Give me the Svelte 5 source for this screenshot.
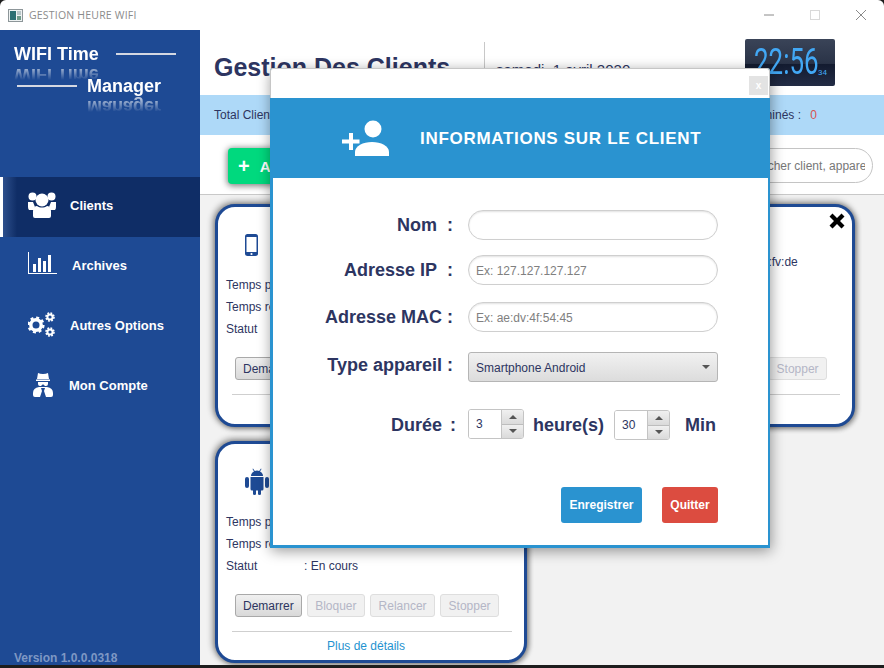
<script>
	const nav = [
		{ id: 'clients', label: 'Clients', active: true },
		{ id: 'archives', label: 'Archives' },
		{ id: 'options', label: 'Autres Options' },
		{ id: 'compte', label: 'Mon Compte' }
	];

	const clients = [
		{ type: 'phone', nom: 'Client 1', ip: '192.168.1.12', mac: 'ae:dv:4f:54:fv:de', statut: 'En cours' },
		{ type: 'phone', nom: 'Client 2', ip: '192.168.1.13', mac: 'ae:dv:4f:54:fv:de', statut: 'En cours' },
		{ type: 'android', nom: 'Client 3', ip: '192.168.1.14', mac: 'ae:dv:4f:54:fv:de', statut: 'En cours' }
	];
</script>

{#snippet navIcon(id)}
	{#if id === 'clients'}
		<svg class="ic-users" viewBox="0 0 28 26" fill="#fff">
			<circle cx="4.500" cy="4.500" r="4" />
			<circle cx="23.500" cy="4.500" r="4" />
			<circle cx="14" cy="8" r="6.500" />
			<path d="M0 10h5l2 5-1 3H1q-1-1-1-3zM28 10h-5l-2 5 1 3h5q1-1 1-3z" />
			<path d="M5 24v-5c0-3 2-5 4-5 3 2 7 2 10 0 2 0 4 2 4 5v5q0 2-2 2H7q-2 0-2-2z" />
		</svg>
	{:else if id === 'archives'}
		<svg class="ic-chart" viewBox="0 0 29 22" fill="#fff">
			<path d="M0 0h1v21h28v1H0z" />
			<rect x="5" y="12" width="3" height="8" />
			<rect x="10" y="6" width="3" height="14" />
			<rect x="15" y="9" width="3" height="11" />
			<rect x="20" y="3" width="3" height="17" />
		</svg>
	{:else if id === 'options'}
		<svg class="ic-gears" viewBox="0 0 28 26" fill="none" stroke="#fff">
			<circle cx="8" cy="13" r="5.200" stroke-width="3.400" />
			<circle cx="8" cy="13" r="7.400" stroke-width="2.400" stroke-dasharray="3 2.800" />
			<circle cx="22" cy="5" r="2.600" stroke-width="2" />
			<circle cx="22" cy="5" r="4" stroke-width="1.600" stroke-dasharray="1.800 1.340" />
			<circle cx="22" cy="20" r="2.600" stroke-width="2" />
			<circle cx="22" cy="20" r="4" stroke-width="1.600" stroke-dasharray="1.800 1.340" />
		</svg>
	{:else}
		<svg class="ic-spy" viewBox="0 0 20 24" fill="#fff">
			<path d="M5 0q2 1 5 1t5-1l1 6H4z" />
			<path d="M3 6.500h14v1.500H3z" />
			<path d="M5 9h10v2q0 2-2 2h-1l-1.500-1.500h-1L8 13H7q-2 0-2-2z" />
			<path d="M6 14h8q6 1 6 6v2q0 2-2 2h-5l-2-6 1-3H8l1 3-2 6H2q-2 0-2-2v-2q0-5 6-6z" />
		</svg>
	{/if}
{/snippet}

{#snippet deviceIcon(type)}
	{#if type === 'android'}
		<svg class="ic-android" viewBox="0 0 24 28" fill="#1e4a94">
			<path d="M6 9q0-3 3-4.500L7.500 2l.5-.5L9.800 4q2.200-.8 4.400 0L16 1.500l.5.5L15 4.500q3 1.500 3 4.500z" />
			<path d="M5.500 10h13v12q0 1.500-1.500 1.500h-1V27q0 1-1.500 1T13 27v-3.500h-2V27q0 1-1.500 1T8 27v-3.500H7q-1.500 0-1.500-1.500z" />
			<rect x="0" y="10" width="4" height="11" rx="2" />
			<rect x="20" y="10" width="4" height="11" rx="2" />
		</svg>
	{:else}
		<svg class="ic-phone" viewBox="0 0 13 22">
			<rect width="13" height="22" rx="2.500" fill="#1e4a94" />
			<rect x="1.500" y="3" width="10" height="15" fill="#fff" />
			<circle cx="6.500" cy="20" r="1.100" fill="#fff" />
		</svg>
	{/if}
{/snippet}

<div class="window">
	<header class="titlebar">
		<svg class="app-icon" viewBox="0 0 15 13">
			<rect x=".5" y=".5" width="14" height="12" fill="#eef2f2" stroke="#8d9699" />
			<rect x="2" y="2" width="6" height="9" fill="#2c6f73" />
			<rect x="9" y="2" width="4" height="4" fill="#b9c6c9" />
			<rect x="9" y="7" width="4" height="4" fill="#6f9a8a" />
		</svg>
		<span class="app-title">GESTION HEURE WIFI</span>
		<div class="win-ctrls">
			<svg viewBox="0 0 12 12" stroke="#8a8a8a"><path d="M1 6h10" /></svg>
			<svg viewBox="0 0 12 12" stroke="#d9d9d9" fill="none"><rect x="1.500" y="1.500" width="9" height="9" /></svg>
			<svg viewBox="0 0 12 12" stroke="#8a8a8a"><path d="M1 1l10 10M11 1L1 11" /></svg>
		</div>
	</header>

	<div class="shell">
		<aside class="sidebar">
			<div class="logo">
				<div class="logo-row first">
					<span class="logo-text">WIFI Time</span>
					<i class="logo-line"></i>
				</div>
				<div class="logo-row second">
					<i class="logo-line"></i>
					<span class="logo-text">Manager</span>
				</div>
			</div>
			<nav class="nav">
				{#each nav as item}
					<a class="nav-item {item.id}" class:active={item.active} href="#{item.id}">
						{@render navIcon(item.id)}
						<span>{item.label}</span>
					</a>
				{/each}
			</nav>
			<div class="version">Version 1.0.0.0318</div>
		</aside>

		<main class="main">
			<div class="top">
				<h1>Gestion Des Clients</h1>
				<div class="date">samedi, 1 avril 2020</div>
				<div class="clock"><span class="time">22:56</span><span class="secs">34</span></div>
			</div>
			<div class="stats">
				<span>Total Clients : <b>3</b></span>
				<span class="last">Terminés : <b>0</b></span>
			</div>
			<div class="toolbar">
				<button class="add"><span class="plus">+</span>Ajouter Client</button>
				<input class="search" placeholder="Rechercher client, appareil" />
			</div>
			<div class="cards">
				{#each clients as c}
					<article class="card">
						<svg class="close" viewBox="0 0 16 16" fill="#000">
							<path d="M3.500 0.500L8 5l4.500-4.500 3 3L11 8l4.500 4.500-3 3L8 11l-4.500 4.500-3-3L5 8 .5 3.500z" />
						</svg>
						<div class="card-head">
							<div class="device">{@render deviceIcon(c.type)}</div>
							<div class="ident">
								<div>Nom : {c.nom}</div>
								<div>Adresse IP : {c.ip}</div>
								<div>Adresse MAC : {c.mac}</div>
							</div>
						</div>
						<div class="line"><span>Temps passé</span><span>: 00:12:40</span></div>
						<div class="line"><span>Temps restant</span><span>: 02:47:20</span></div>
						<div class="line"><span>Statut</span><span>: {c.statut}</span></div>
						<div class="actions">
							<button class="btn on">Demarrer</button>
							<button class="btn" disabled>Bloquer</button>
							<button class="btn" disabled>Relancer</button>
							<button class="btn" disabled>Stopper</button>
						</div>
						<div class="more"><a href="#details">Plus de détails</a></div>
					</article>
				{/each}
			</div>
		</main>
	</div>

	<div class="taskbar"></div>

	<section class="modal">
		<div class="modal-top">
			<button class="modal-x">x</button>
		</div>
		<div class="modal-head">
			<svg class="ic-add" viewBox="0 0 48 37" fill="#fff">
				<circle cx="32" cy="9" r="8.500" />
				<path d="M14 36v-4c0-6 8-10 17-10s17 4 17 10v4z" />
				<path d="M8 13h4v6.500h6.500v4H12V30H8v-6.500H1v-4h7z" />
			</svg>
			<h2>INFORMATIONS SUR LE CLIENT</h2>
		</div>
		<form class="modal-body">
			<div class="field f-nom">
				<label for="nom">Nom&nbsp; :</label>
				<input id="nom" class="pill" />
			</div>
			<div class="field f-ip">
				<label for="ip">Adresse IP&nbsp; :</label>
				<input id="ip" class="pill" placeholder="Ex: 127.127.127.127" />
			</div>
			<div class="field f-mac">
				<label for="mac">Adresse MAC :</label>
				<input id="mac" class="pill" placeholder="Ex: ae:dv:4f:54:45" />
			</div>
			<div class="field f-type">
				<label for="type">Type appareil :</label>
				<div class="select">
					<select id="type"><option>Smartphone Android</option></select>
				</div>
			</div>
			<div class="field f-duree">
				<label for="h">Durée&nbsp; :</label>
				<div class="spin">
					<input id="h" value="3" />
					<div class="arrows"><span class="up"></span><span class="down"></span></div>
				</div>
				<span class="unit heures">heure(s)</span>
				<div class="spin low">
					<input value="30" />
					<div class="arrows"><span class="up"></span><span class="down"></span></div>
				</div>
				<span class="unit min">Min</span>
			</div>
			<div class="modal-actions">
				<button type="button" class="save">Enregistrer</button>
				<button type="button" class="quit">Quitter</button>
			</div>
		</form>
	</section>
</div>

<style>
	:global(body) {
		background: #1d1d1d;
	}
	.window {
		position: relative;
		width: 884px;
		height: 668px;
		display: flex;
		flex-direction: column;
		overflow: hidden;
		font-family: 'Liberation Sans', Arial, sans-serif;
		color: #2d3561;
		border-radius: 6px 6px 0 0;
	}

	.titlebar {
		height: 30px;
		flex: none;
		display: flex;
		align-items: center;
		padding-left: 8px;
		background: #fff;
	}
	.app-icon {
		width: 15px;
		height: 13px;
		margin-right: 6px;
	}
	.app-title {
		font-family: 'Open Sans', sans-serif;
		font-size: 10.5px;
		color: #8b8b8b;
		letter-spacing: 0.2px;
	}
	.win-ctrls {
		margin-left: auto;
		display: flex;
		gap: 34px;
		padding-right: 17px;
	}
	.win-ctrls svg {
		width: 12px;
		height: 12px;
	}

	.shell {
		flex: 1;
		display: flex;
		min-height: 0;
	}
	.sidebar {
		width: 200px;
		flex: none;
		display: flex;
		flex-direction: column;
		background: #1e4a94;
		color: #fff;
	}
	.logo {
		height: 147px;
		flex: none;
		font-size: 18px;
		font-weight: 700;
	}
	.logo-row {
		display: flex;
		align-items: center;
	}
	.logo-row.first {
		padding: 14px 0 0 14px;
		gap: 17px;
	}
	.logo-row.second {
		padding: 12px 0 0 17px;
		gap: 10px;
	}
	.logo-text {
		line-height: 20px;
		-webkit-box-reflect: below 1px linear-gradient(transparent 25%, rgba(255, 255, 255, 0.75));
	}
	.logo-line {
		display: block;
		width: 60px;
		height: 2px;
		background: #d4d8e2;
	}

	.nav {
		display: flex;
		flex-direction: column;
	}
	.nav-item {
		height: 60px;
		box-sizing: border-box;
		padding: 0 0 4px 28px;
		display: flex;
		align-items: center;
		color: #fff;
		font-size: 13px;
		font-weight: 700;
		text-decoration: none;
	}
	.nav-item.active {
		background: linear-gradient(90deg, #2d4f8c 0, #0f2d66 14px);
		border-left: 3px solid #fff;
		padding-left: 25px;
	}
	.ic-users {
		width: 28px;
		height: 26px;
		margin-right: 14px;
	}
	.ic-chart {
		width: 29px;
		height: 22px;
		margin: -4px 15px 0 0;
	}
	.ic-gears {
		width: 28px;
		height: 26px;
		margin-right: 14px;
	}
	.ic-spy {
		width: 20px;
		height: 24px;
		margin: 0 16px 0 5px;
	}
	.version {
		margin: auto 0 0 14px;
		font-size: 12px;
		font-weight: 700;
		line-height: 14px;
		color: #7e98c4;
	}

	.main {
		flex: 1;
		min-width: 0;
		display: flex;
		flex-direction: column;
		background: #fff;
	}
	.top {
		height: 65px;
		flex: none;
		display: flex;
		align-items: center;
		padding-left: 14px;
	}
	.top h1 {
		width: 270px;
		margin: 10px 0 0;
		font-size: 25px;
		font-weight: 700;
	}
	.date {
		align-self: stretch;
		margin-top: 12px;
		padding: 19px 0 0 11px;
		width: 249px;
		border-left: 1px solid #c8c8c8;
		font-size: 15px;
	}
	.clock {
		width: 90px;
		height: 47px;
		display: flex;
		align-items: flex-end;
		gap: 2px;
		padding: 0 0 7px 9px;
		box-sizing: border-box;
		border-radius: 2px;
		background: linear-gradient(#3a4458 0, #2a3347 52%, #131b30 54%, #232c45 100%);
		color: #42a8f5;
		font-family: Roboto, sans-serif;
		font-weight: 400;
	}
	.time {
		display: inline-block;
		width: 62px;
		font-size: 36px;
		line-height: 34px;
		transform: scaleX(0.72);
		transform-origin: left;
		white-space: nowrap;
	}
	.secs {
		font-size: 8px;
		line-height: 10px;
		margin-bottom: 1px;
	}
	.stats {
		height: 40px;
		flex: none;
		display: flex;
		align-items: center;
		padding: 0 67px 0 14px;
		background: #aed9f8;
		font-size: 12px;
	}
	.stats .last {
		margin-left: auto;
	}
	.stats b {
		font-weight: 400;
		color: #d9534f;
		margin-left: 6px;
	}
	.toolbar {
		height: 60px;
		flex: none;
		box-sizing: border-box;
		display: flex;
		align-items: flex-start;
		justify-content: space-between;
		padding: 13px 11px 0 28px;
		border-bottom: 1px solid #c8c8c8;
	}
	.add {
		height: 36px;
		width: 140px;
		padding: 0 0 0 10px;
		display: flex;
		align-items: center;
		border: 0;
		border-radius: 4px;
		background: #00d97e;
		box-shadow: 0 1px 6px 1px rgba(0, 0, 0, 0.5);
		color: #fff;
		font: 700 15px 'Liberation Sans', Arial, sans-serif;
	}
	.plus {
		font-size: 20px;
		margin-right: 10px;
	}
	.search {
		width: 154px;
		height: 35px;
		box-sizing: border-box;
		padding: 0 7px 0 9px;
		border: 1px solid #c4c4c4;
		border-radius: 18px;
		font: 12px 'Liberation Sans', Arial, sans-serif;
	}
	.search::placeholder {
		color: #777;
	}

	.cards {
		flex: 1;
		min-height: 0;
		display: grid;
		grid-template-columns: 312px 312px;
		grid-template-rows: 223px 222px;
		gap: 14px 16px;
		padding: 9px 0 0 15px;
		background: #f2f2f2;
		overflow: hidden;
	}
	.card {
		position: relative;
		box-sizing: border-box;
		padding: 0 8px;
		background: #fff;
		border: 3px solid #1e4a94;
		border-radius: 20px;
		box-shadow: -1px -1px 6px 1px rgba(0, 0, 0, 0.45), 2px 2px 5px rgba(0, 0, 0, 0.3);
		font-size: 12px;
	}
	.close {
		position: absolute;
		top: 6px;
		right: 7px;
		width: 16px;
		height: 16px;
	}
	.card-head {
		height: 67px;
		display: flex;
	}
	.device {
		width: 71px;
		padding: 27px 0 0 19px;
		box-sizing: border-box;
	}
	.ic-phone {
		display: block;
		width: 13px;
		height: 22px;
	}
	.ic-android {
		display: block;
		width: 24px;
		height: 28px;
		margin-top: -4px;
	}
	.ident {
		flex: 1;
		padding-top: 18px;
		line-height: 15px;
		white-space: nowrap;
	}
	.line {
		display: grid;
		grid-template-columns: 78px 1fr;
		height: 22px;
		line-height: 22px;
	}
	.actions {
		display: flex;
		gap: 5px;
		margin: 17px 0 0 9px;
	}
	.btn {
		height: 23px;
		padding: 0 7.5px;
		border: 1px solid #dedede;
		border-radius: 3px;
		background: #f1f1f1;
		color: #b4b6c6;
		font: 12px 'Liberation Sans', Arial, sans-serif;
	}
	.btn.on {
		padding: 0 7px;
		border-color: #a9a9a9;
		background: linear-gradient(#f0f0f0, #d9d9d9);
		color: #2d3561;
	}
	.more {
		margin: 14px 4px 0 6px;
		padding-top: 7px;
		border-top: 1px solid #cfcfcf;
		text-align: center;
		line-height: 14px;
	}
	.more a {
		color: #1f93d0;
		text-decoration: none;
		margin-right: 12px;
	}

	.taskbar {
		height: 3px;
		flex: none;
		background: #1d1d1d;
	}

	.modal {
		position: absolute;
		top: 68px;
		left: 270px;
		width: 500px;
		height: 480px;
		display: flex;
		flex-direction: column;
		box-shadow: 1px 3px 14px rgba(0, 0, 0, 0.4);
		border-radius: 3px 3px 0 0;
		background: #2a93d0;
	}
	.modal-top {
		height: 30px;
		flex: none;
		box-sizing: border-box;
		display: flex;
		justify-content: flex-end;
		padding: 7px 1px 0 0;
		background: #fff;
		border: 1px solid #c6c6c6;
		border-bottom: 0;
		border-radius: 3px 3px 0 0;
	}
	.modal-x {
		width: 19px;
		height: 19px;
		padding: 0;
		border: 0;
		background: #e3e3e3;
		color: #fff;
		font: 700 10px 'Liberation Sans', Arial, sans-serif;
	}
	.modal-head {
		height: 80px;
		flex: none;
		display: flex;
		align-items: center;
		padding-left: 71px;
		color: #fff;
	}
	.ic-add {
		width: 48px;
		height: 37px;
		margin-right: 31px;
	}
	.modal-head h2 {
		margin: 2px 0 0;
		font-size: 17px;
		font-weight: 700;
		letter-spacing: 0.7px;
	}
	.modal-body {
		flex: 1;
		margin: 0 2px 3px 3px;
		padding-top: 32px;
		background: #fff;
	}
	.field {
		display: flex;
		align-items: center;
		height: 30px;
	}
	.f-nom {
		margin-bottom: 15px;
	}
	.f-ip {
		margin-bottom: 17px;
	}
	.f-mac {
		margin-bottom: 20px;
	}
	.f-type {
		margin-bottom: 27px;
	}
	.field label {
		width: 180px;
		margin-right: 15px;
		padding-top: 1px;
		text-align: right;
		font-size: 18px;
		font-weight: 700;
		white-space: nowrap;
	}
	.f-type label {
		padding: 0 0 3px;
	}
	.f-duree label {
		width: 183px;
		margin-right: 12px;
		padding-top: 2px;
		word-spacing: -1px;
	}
	.pill {
		width: 250px;
		height: 30px;
		box-sizing: border-box;
		padding: 1px 7px 0;
		border: 1px solid #cfcfcf;
		border-radius: 15px;
		box-shadow: inset 0 1px 2px rgba(0, 0, 0, 0.12);
		font: 12px 'Liberation Sans', Arial, sans-serif;
		outline: 0;
	}
	.pill::placeholder {
		color: #808080;
	}
	.select {
		position: relative;
		width: 250px;
		height: 30px;
	}
	.select select {
		width: 100%;
		height: 100%;
		padding: 1px 7px 0;
		appearance: none;
		border: 1px solid #b5b5b5;
		border-radius: 3px;
		background: linear-gradient(#f1f1f1, #dcdcdc);
		color: #2d3561;
		font: 12px 'Liberation Sans', Arial, sans-serif;
	}
	.select::after {
		content: '';
		position: absolute;
		right: 8px;
		top: 13px;
		border: 4px solid transparent;
		border-top: 4px solid #555;
	}
	.spin {
		width: 56px;
		height: 30px;
		box-sizing: border-box;
		flex: none;
		display: flex;
		border: 1px solid #c4c4c4;
		border-radius: 3px;
		overflow: hidden;
	}
	.spin.low {
		margin: 2px 0 0;
	}
	.spin input {
		width: 32px;
		box-sizing: border-box;
		padding: 0 0 0 7px;
		border: 0;
		color: #2d3561;
		font: 12px 'Liberation Sans', Arial, sans-serif;
		outline: 0;
	}
	.arrows {
		flex: 1;
		display: flex;
		flex-direction: column;
		border-left: 1px solid #c4c4c4;
	}
	.arrows span {
		flex: 1;
		display: flex;
		align-items: center;
		justify-content: center;
		background: linear-gradient(#f0f0f0, #dadada);
	}
	.arrows span + span {
		border-top: 1px solid #bdbdbd;
	}
	.arrows span::after {
		content: '';
		border: 4px solid transparent;
	}
	.arrows .up::after {
		border-top: 0;
		border-bottom: 4px solid #555;
	}
	.arrows .down::after {
		border-bottom: 0;
		border-top: 4px solid #555;
	}
	.unit {
		font-size: 18px;
		font-weight: 700;
		padding-top: 2px;
	}
	.heures {
		width: 90px;
		padding-left: 9px;
		box-sizing: border-box;
	}
	.min {
		margin-left: 15px;
	}
	.modal-actions {
		display: flex;
		justify-content: flex-end;
		gap: 20px;
		margin: 48px 50px 0 0;
	}
	.modal-actions button {
		height: 36px;
		padding: 0;
		border: 0;
		border-radius: 3px;
		color: #fff;
		font: 700 12px 'Liberation Sans', Arial, sans-serif;
	}
	.save {
		width: 81px;
		background: #2a93d0;
	}
	.quit {
		width: 56px;
		background: #dc4c40;
	}
</style>
